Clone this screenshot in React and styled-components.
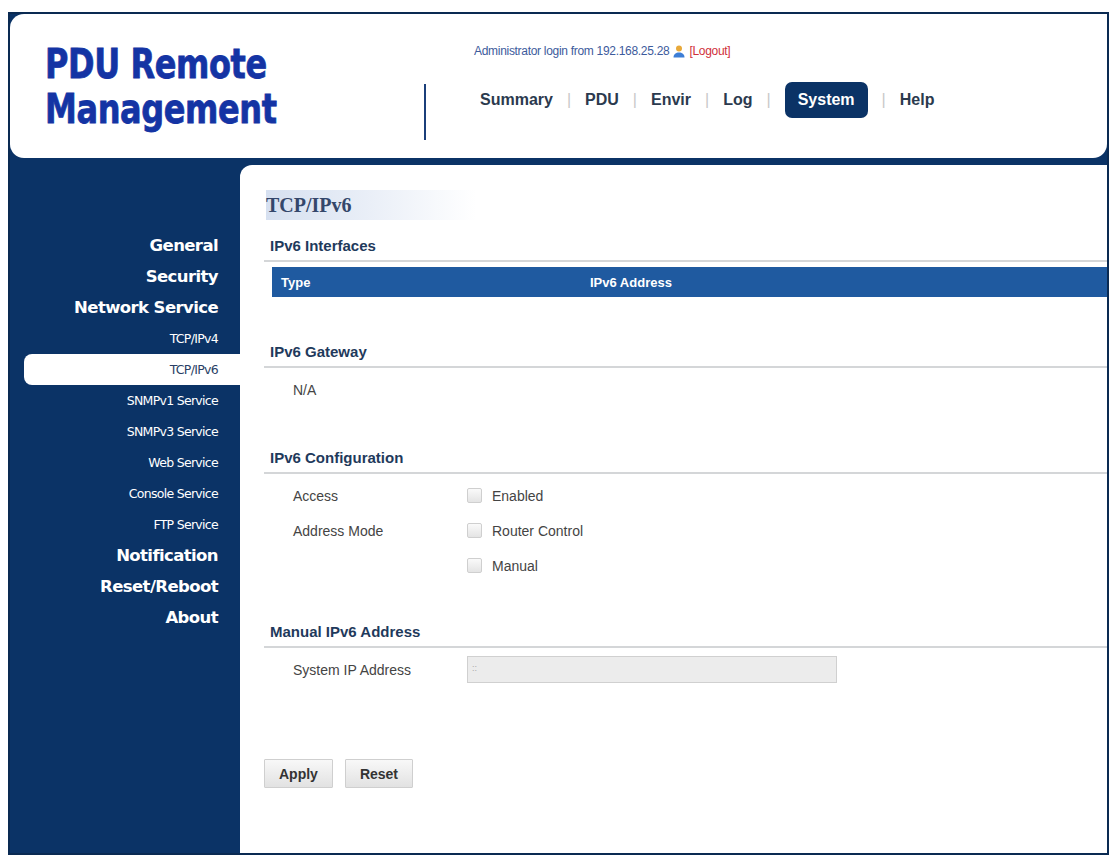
import React from "react";
import styled, { createGlobalStyle } from "styled-components";

const Global = createGlobalStyle`
  html, body { margin: 0; background: #fff; }
  body { font-family: "Liberation Sans", Arial, sans-serif; }
`;

const Frame = styled.div`
  margin: 12px 6px 0 8px;
  height: 843px;
  box-sizing: border-box;
  background: #0b3366;
  border: 2px solid #0a2a52;
  display: flex;
  flex-direction: column;
`;

const Header = styled.header`
  height: 144px;
  background: #fff;
  border-radius: 14px;
  border-top-right-radius: 0;
  display: flex;
  align-items: flex-start;
  flex-shrink: 0;
`;

const Logo = styled.h1`
  margin: 28px 0 0 35px;
  width: 379px;
  font-family: "DejaVu Sans", sans-serif;
  font-weight: 900;
  font-size: 40px;
  line-height: 45px;
  color: #1434a4;
  letter-spacing: -0.5px;
  transform: scaleX(0.8);
  transform-origin: left top;
  -webkit-text-stroke: 0.8px #1434a4;
`;

const Divider = styled.div`
  width: 2px;
  height: 56px;
  background: #1b3f7a;
  margin-top: 70px;
`;

const HeadRight = styled.div`
  margin-left: 48px;
  padding-top: 30px;
  display: flex;
  flex-direction: column;
`;

const Login = styled.div`
  font-size: 12px;
  color: #3d5b9c;
  letter-spacing: -0.3px;
  display: flex;
  align-items: center;
  gap: 3px;
`;

const Logout = styled.span`
  color: #d0303a;
`;

const Nav = styled.nav`
  margin-top: 24px;
  display: flex;
  align-items: center;
  margin-left: 6px;
`;

const NavItem = styled.span`
  font-size: 16px;
  font-weight: bold;
  color: ${(p) => (p.$active ? "#fff" : "#2b3a4e")};
  background: ${(p) => (p.$active ? "#0b3366" : "transparent")};
  border-radius: 7px;
  padding: ${(p) => (p.$active ? "9px 13px" : "0")};
`;

const Sep = styled.span`
  color: #c8c8c8;
  font-size: 16px;
  margin: 0 14px;
`;

const Body = styled.div`
  flex: 1;
  display: flex;
  margin-top: 7px;
`;

const Side = styled.aside`
  width: 230px;
  flex-shrink: 0;
  padding-top: 65px;
  display: flex;
  flex-direction: column;
  align-items: stretch;
`;

const SideItem = styled.div`
  font-family: "DejaVu Sans", Verdana, sans-serif;
  text-align: right;
  padding-right: 22px;
  color: ${(p) => (p.$active ? "#2a3f66" : "#fff")};
  background: ${(p) => (p.$active ? "#fff" : "transparent")};
  border-radius: ${(p) => (p.$active ? "8px 0 0 8px" : "0")};
  margin-left: ${(p) => (p.$active ? "14px" : "0")};
  font-size: ${(p) => (p.$major ? "16.5px" : "12.5px")};
  font-weight: ${(p) => (p.$major ? "bold" : "normal")};
  height: 31px;
  line-height: 31px;
  letter-spacing: ${(p) => (p.$major ? "-0.6px" : "-0.7px")};
`;

const Content = styled.main`
  flex: 1;
  background: #fff;
  border-top-left-radius: 12px;
  padding: 25px 0 0 24px;
  display: flex;
  flex-direction: column;
`;

const Title = styled.h2`
  margin: 0 0 17px 2px;
  width: 210px;
  height: 30px;
  line-height: 30px;
  font-family: "Liberation Serif", "Times New Roman", serif;
  font-size: 20px;
  font-weight: bold;
  color: #34476b;
  background: linear-gradient(90deg, #d6e0f0 0%, #eef2f9 60%, #fff 100%);
`;

const Section = styled.section`
  margin-bottom: ${(p) => p.$mb || 0}px;
`;

const SecHead = styled.h3`
  margin: 0;
  padding: 0 0 6px 6px;
  font-size: 15px;
  font-weight: bold;
  color: #1f3a5c;
  border-bottom: 2px solid #d4d6d8;
`;

const TableHead = styled.div`
  margin: 5px 0 0 8px;
  height: 30px;
  background: #1f5aa0;
  display: flex;
  align-items: center;
  color: #fff;
  font-size: 13px;
  font-weight: bold;
`;

const Cell = styled.span`
  width: ${(p) => p.$w}px;
  padding-left: 9px;
`;

const Rows = styled.div`
  padding: 12px 0 0 29px;
  display: flex;
  flex-direction: column;
  gap: 16px;
`;

const Row = styled.div`
  display: flex;
  align-items: center;
  font-size: 14px;
  color: #444;
  height: 19px;
`;

const Label = styled.span`
  width: 174px;
`;

const Check = styled.span`
  width: 13px;
  height: 13px;
  border: 1px solid #cfcfcf;
  border-radius: 2px;
  background: linear-gradient(#fafafa, #e4e4e4);
  margin-right: 10px;
`;

const Input = styled.div`
  width: 370px;
  height: 27px;
  background: #ececec;
  border: 1px solid #d0d0d0;
  box-sizing: border-box;
  font-size: 9px;
  color: #aaa;
  padding: 6px 0 0 4px;
`;

const Buttons = styled.div`
  display: flex;
  gap: 12px;
  margin-top: 80px;
`;

const Btn = styled.button`
  font-family: "Liberation Sans", Arial, sans-serif;
  font-size: 14px;
  font-weight: bold;
  color: #333;
  height: 29px;
  padding: 0 14px;
  border: 1px solid #cfcfcf;
  background: linear-gradient(#f8f8f8, #e2e2e2);
  border-radius: 1px;
`;

const UserIcon = () => (
  <svg width="14" height="14" viewBox="0 0 14 14">
    <circle cx="7" cy="4.5" r="3" fill="#e8a93a" />
    <path d="M1.5 13.5c0-3.5 2.5-5 5.5-5s5.5 1.5 5.5 5z" fill="#3d7ed6" />
  </svg>
);

const side = [
  ["General", 1], ["Security", 1], ["Network Service", 1],
  ["TCP/IPv4"], ["TCP/IPv6", 0, 1], ["SNMPv1 Service"], ["SNMPv3 Service"],
  ["Web Service"], ["Console Service"], ["FTP Service"],
  ["Notification", 1], ["Reset/Reboot", 1], ["About", 1],
];

const navs = ["Summary", "PDU", "Envir", "Log", "System", "Help"];

export default function App() {
  return (
    <>
      <Global />
      <Frame>
        <Header>
          <Logo>PDU Remote<br />Management</Logo>
          <Divider />
          <HeadRight>
            <Login>
              Administrator login from 192.168.25.28 <UserIcon /> <Logout>[Logout]</Logout>
            </Login>
            <Nav>
              {navs.map((n, i) => (
                <React.Fragment key={n}>
                  {i > 0 && <Sep>|</Sep>}
                  <NavItem $active={n === "System"}>{n}</NavItem>
                </React.Fragment>
              ))}
            </Nav>
          </HeadRight>
        </Header>
        <Body>
          <Side>
            {side.map(([t, major, active]) => (
              <SideItem key={t} $major={major} $active={active}>{t}</SideItem>
            ))}
          </Side>
          <Content>
            <Title>TCP/IPv6</Title>
            <Section $mb={46}>
              <SecHead>IPv6 Interfaces</SecHead>
              <TableHead>
                <Cell $w={300}>Type</Cell>
                <Cell $w={300}>IPv6 Address</Cell>
              </TableHead>
            </Section>
            <Section $mb={50}>
              <SecHead>IPv6 Gateway</SecHead>
              <Rows><Row>N/A</Row></Rows>
            </Section>
            <Section $mb={48}>
              <SecHead>IPv6 Configuration</SecHead>
              <Rows>
                <Row><Label>Access</Label><Check />Enabled</Row>
                <Row><Label>Address Mode</Label><Check />Router Control</Row>
                <Row><Label /><Check />Manual</Row>
              </Rows>
            </Section>
            <Section>
              <SecHead>Manual IPv6 Address</SecHead>
              <Rows>
                <Row><Label>System IP Address</Label><Input>::</Input></Row>
              </Rows>
            </Section>
            <Buttons>
              <Btn>Apply</Btn>
              <Btn>Reset</Btn>
            </Buttons>
          </Content>
        </Body>
      </Frame>
    </>
  );
}
